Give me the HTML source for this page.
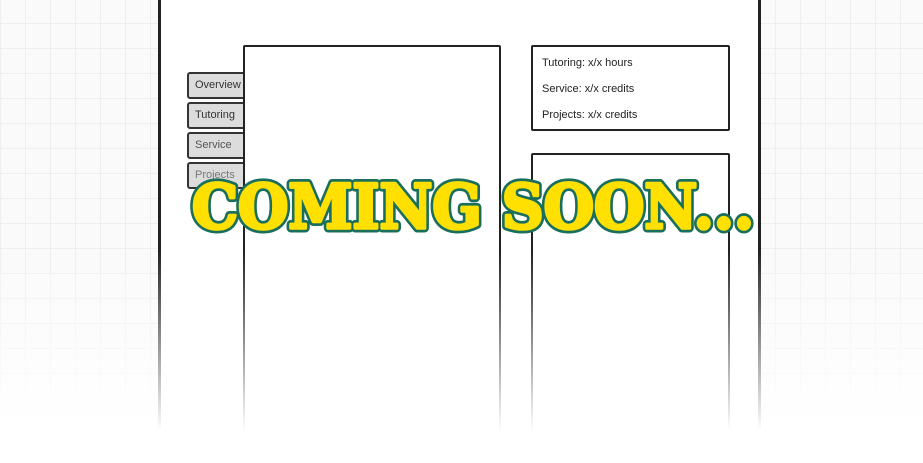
<!DOCTYPE html>
<html><head><style>
html,body{margin:0;padding:0;width:923px;height:463px;overflow:hidden}
body{position:relative;font-family:"Liberation Sans",sans-serif;
background-color:#fafafa;
background-image:linear-gradient(#efefef 1px,transparent 1px),linear-gradient(90deg,#efefef 1px,transparent 1px);
background-size:25px 25px;background-position:0 -2px}
.frame{position:absolute;left:158px;top:-5px;width:597px;height:470px;background:#fff;border-left:3px solid #222;border-right:3px solid #222}
.box{position:absolute;border:2.5px solid #222;background:#fff;border-radius:2px}
.tab{position:absolute;left:187px;width:52px;height:23px;border:2px solid #333;border-radius:3px;background:#dcdcdc;font-size:11px;color:#333;line-height:23px;padding-left:6px}
.t{font-size:11px;color:#222;position:absolute;left:9px}
.wfade{position:absolute;left:0;right:0;top:250px;height:213px;background:linear-gradient(rgba(255,255,255,0),#fff 85%);z-index:5}
</style></head><body>
<div class="frame"></div>
<div class="tab" style="top:72px">Overview</div>
<div class="tab" style="top:102px">Tutoring</div>
<div class="tab" style="top:132px;color:#555">Service</div>
<div class="tab" style="top:162px;color:#777">Projects</div>
<div class="box" style="left:243px;top:45px;width:254px;height:420px"></div>
<div class="box" style="left:531px;top:45px;width:195px;height:82px">
<div class="t" style="top:10px">Tutoring: x/x hours</div>
<div class="t" style="top:36px">Service: x/x credits</div>
<div class="t" style="top:62px">Projects: x/x credits</div>
</div>
<div class="box" style="left:531px;top:153px;width:195px;height:320px"></div>
<div class="wfade"></div>
<svg style="position:absolute;left:0;top:0;z-index:10" width="923" height="463">
<g font-family="DejaVu Serif" font-weight="bold" font-size="61" stroke-linejoin="round">
<text x="192" y="228" textLength="562" lengthAdjust="spacingAndGlyphs" fill="#1a6e5c" stroke="#1a6e5c" stroke-width="9">COMING SOON...</text>
<text x="192" y="228" textLength="562" lengthAdjust="spacingAndGlyphs" fill="#ffe000" stroke="#ffe000" stroke-width="3.5">COMING SOON...</text>
</g>
</svg>
</body></html>
